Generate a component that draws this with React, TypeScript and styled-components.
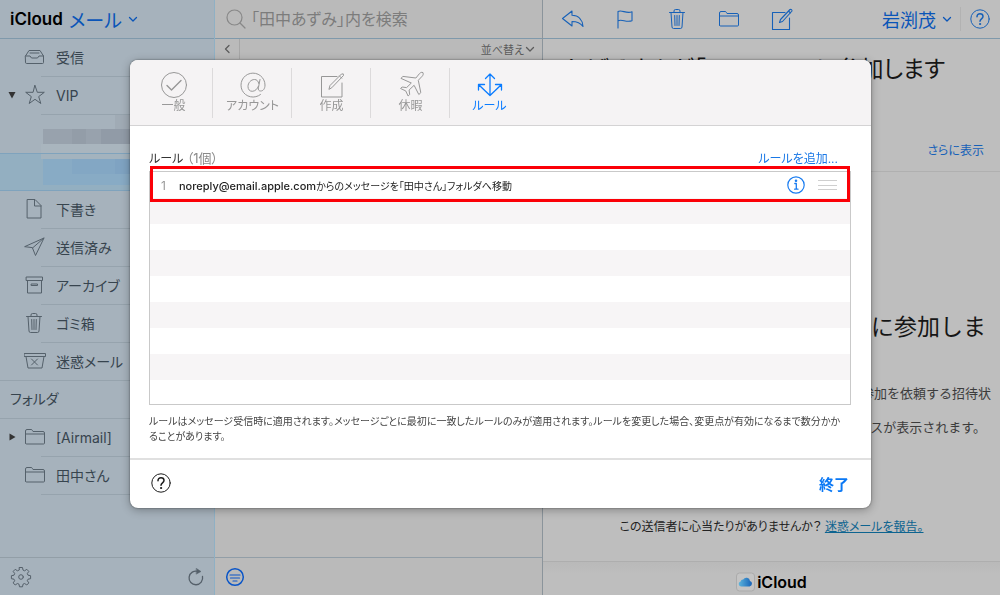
import React from "react";
import styled, { createGlobalStyle, css } from "styled-components";

const GlobalStyle = createGlobalStyle`
  * { box-sizing: border-box; }
  body {
    margin: 0;
    font-family: Inter, "Noto Sans CJK JP", sans-serif;
    font-feature-settings: "palt";
    color: #1c1c1c;
    background: #bebebe;
  }
  ul, ol { list-style: none; margin: 0; padding: 0; }
  h1, h2, h3, p { margin: 0; font-weight: 400; }
  svg { display: block; flex: none; }
`;

const line = "#7f99ab";

const Shell = styled.div`
  display: grid;
  grid-template-columns: 215px 328px 1fr;
  height: 100vh;
  overflow: hidden;
`;

const Pane = styled.div`
  display: flex;
  flex-direction: column;
  min-width: 0;
  min-height: 0;
`;

const Sidebar = styled(Pane)`
  background: #a6b2bc;
  border-right: 1px solid #8fb0c4;
  color: #37444e;
`;

const ListPane = styled(Pane)`
  background: #bababa;
  border-right: 1px solid #8b949b;
`;

const Bar = styled.header<{ $pad: string }>`
  display: flex;
  align-items: center;
  height: 39px;
  flex: none;
  padding: ${(p) => p.$pad};
  border-bottom: 1px solid ${line};
`;

const PlainButton = styled.button`
  display: flex;
  align-items: center;
  justify-content: center;
  padding: 0;
  border: 0;
  background: none;
  color: inherit;
  font: inherit;
  font-feature-settings: inherit;
  cursor: pointer;
`;

const Brand = styled.h1`
  font-size: 17px;
  font-weight: 600;
  color: #000;
`;

const AppSwitch = styled(PlainButton)`
  gap: 6px;
  margin-left: 6px;
  font-size: 19px;
  color: #0a55b8;
`;

const Mailboxes = styled.nav`
  flex: 1;
  min-height: 0;
`;

const Mailbox = styled.li`
  display: grid;
  grid-template-columns: 24px 32px 1fr;
  align-items: center;
  height: 38px;
  padding-bottom: 2px;
  color: #55616b;
`;

const MailboxLink = styled.a`
  display: flex;
  align-items: center;
  align-self: stretch;
  font-size: 14px;
  color: #37444e;
  text-decoration: none;
`;

const Divider = styled.hr<{ $left: number }>`
  height: 1px;
  margin: -1px 0 0 ${(p) => p.$left}px;
  border: 0;
  background: #96a3ad;
`;

const Twisty = styled(PlainButton)`
  color: #333;
`;

const Contact = styled.li<{ $selected?: boolean }>`
  height: 38px;
  padding-left: 41px;
  overflow: hidden;
  ${(p) =>
    p.$selected &&
    css`
      background: #93afc1;
      border-top: 1px solid #7fa3bd;
      border-bottom: 1px solid #7fa3bd;
    `}
`;

const SectionTitle = styled.h2`
  height: 38px;
  padding-left: 10px;
  font-size: 14px;
  line-height: 36px;
`;

const Foot = styled.footer`
  display: flex;
  align-items: center;
  justify-content: space-between;
  height: 38px;
  flex: none;
  padding: 0 9px 0 10px;
  border-top: 1px solid #929ea7;
  color: #55606a;
`;

const FilterButton = styled(PlainButton)`
  color: #0a55c8;
`;

const SearchLabel = styled.label`
  display: flex;
  align-items: center;
  gap: 5px;
  flex: 1;
  color: #888;
`;

const SearchInput = styled.input`
  flex: 1;
  min-width: 0;
  padding: 0;
  border: 0;
  outline: 0;
  background: none;
  font: inherit;
  font-size: 16px;
  font-feature-settings: inherit;
  &::placeholder { color: #7c7c7c; opacity: 1; }
`;

const SortBar = styled.div`
  display: flex;
  justify-content: space-between;
  height: 20px;
  flex: none;
  padding-right: 7px;
  color: #5c5c5c;
  font-size: 11px;
`;

const BackButton = styled(PlainButton)`
  width: 25px;
  border-right: 1px solid #a6a6a6;
`;

const SortButton = styled(PlainButton)`
  gap: 1px;
`;

const Grow = styled.div`
  flex: 1;
`;

const Detail = styled(Pane)`
  background: #bebebe;
`;

const ToolButton = styled(PlainButton)`
  width: 52px;
  height: 38px;
  color: #1761b8;
`;

const Account = styled(PlainButton)`
  gap: 6px;
  height: 24px;
  margin-left: auto;
  padding-right: 8px;
  border-right: 1px solid #b2b2b2;
  font-size: 18px;
  color: #0a55b8;
`;

const HelpTop = styled(PlainButton)`
  margin-left: 9px;
  color: #1761b8;
`;

const Message = styled.article`
  display: flex;
  flex-direction: column;
  align-items: flex-end;
  flex: 1;
  min-height: 0;
`;

const Subject = styled.h2`
  margin-top: 13px;
  padding-right: 55px;
  font-size: 23px;
  line-height: 34px;
  white-space: nowrap;
  color: #161616;
`;

const MoreRow = styled.div`
  display: flex;
  justify-content: flex-end;
  align-self: stretch;
  height: 86px;
  padding: 55px 16px 0 0;
  border-bottom: 1px solid #b0b0b0;
  font-size: 12px;
  line-height: 20px;
`;

const Link = styled.a<{ $tone: string; $under?: boolean }>`
  color: ${(p) => p.$tone};
  text-decoration: ${(p) => (p.$under ? "underline" : "none")};
`;

const Headline = styled.h3`
  margin-top: 137px;
  padding-right: 14px;
  font-size: 23px;
  line-height: 36px;
  font-feature-settings: normal;
  color: #161616;
`;

const Para = styled.p<{ $top: number; $right: number }>`
  margin-top: ${(p) => p.$top}px;
  padding-right: ${(p) => p.$right}px;
  font-size: 13px;
  line-height: 20px;
  font-feature-settings: normal;
  color: #3c3c3c;
`;

const Report = styled.p`
  align-self: center;
  margin-top: 80px;
  font-size: 12px;
  line-height: 20px;
  color: #222;
`;

const MessageFoot = styled.footer`
  display: flex;
  align-items: flex-start;
  justify-content: center;
  gap: 2px;
  align-self: stretch;
  flex: 1;
  margin-top: 24px;
  padding-top: 10px;
  border-top: 1px solid #aeaeae;
  background: linear-gradient(#b9b9b9, #bebebe 12px);
  font-size: 16px;
  font-weight: 600;
  line-height: 20px;
  color: #000;
`;

const Overlay = styled.div`
  position: fixed;
  inset: 0;
  padding: 60px 129px 0 130px;
`;

const Dialog = styled.section`
  border-radius: 8px;
  background: #fff;
  box-shadow: 0 0 2px rgba(0, 0, 0, 0.5), 0 2px 10px rgba(0, 0, 0, 0.3);
  overflow: hidden;
`;

const Tabs = styled.div`
  display: flex;
  align-items: center;
  height: 66px;
  padding-left: 3px;
  border-bottom: 1px solid #d4d3d4;
  background: #f5f3f4;
`;

const Tab = styled(PlainButton)<{ $active?: boolean }>`
  flex-direction: column;
  width: 80px;
  height: 50px;
  margin-right: -1px;
  padding: 0 0 1px 2px;
  border-right: 1px solid ${(p) => (p.$active ? "transparent" : "#dcdadb")};
  font-size: 12px;
  line-height: 14px;
  color: ${(p) => (p.$active ? "#0a7cff" : "#979797")};
`;

const DialogBody = styled.div`
  padding: 21px 20px 14px 19px;
`;

const RulesHead = styled.div`
  display: flex;
  align-items: center;
  justify-content: space-between;
  height: 20px;
  padding-right: 13px;
  font-size: 12px;
`;

const RulesTitle = styled.h2`
  font-size: 12px;
  color: #333;
`;

const Count = styled.span`
  font-size: 13px;
  color: #8a8a8a;
`;

const AddRule = styled(PlainButton)`
  color: #1a78e6;
`;

const RuleList = styled.ol`
  position: relative;
  margin-top: 4px;
  border: 1px solid #c9c9c9;
`;

const Rule = styled.li`
  display: flex;
  align-items: center;
  height: 26px;
  font-size: 12px;
  &:nth-child(even) { background: #f7f5f6; }
  &:last-of-type { height: 24px; }
`;

const RuleNumber = styled.span`
  width: 29px;
  padding-left: 11px;
  color: #999;
`;

const RuleText = styled.span`
  flex: 1;
  font-size: 10px;
  color: #222;
`;

const Address = styled.span`
  font-size: 11px;
  font-weight: 500;
`;

const InfoButton = styled(PlainButton)`
  margin-right: 13px;
  color: #1a7cf0;
`;

const Grip = styled(PlainButton)`
  margin-right: 13px;
  color: #cfcfcf;
`;

const Highlight = styled.div`
  position: absolute;
  inset: -6px 0 auto 0;
  height: 36px;
  border: 3px solid #fb0007;
  pointer-events: none;
`;

const Note = styled.p`
  margin-top: 9px;
  font-size: 10px;
  line-height: 15px;
  color: #444;
`;

const DialogFoot = styled.footer`
  display: flex;
  align-items: center;
  justify-content: space-between;
  height: 50px;
  padding: 0 22px 2px 21px;
  border-top: 2px solid #e0e0e0;
`;

const Done = styled(PlainButton)`
  font-size: 15px;
  font-weight: 700;
  color: #0a78f5;
`;

type IconProps = { w: number; h: number; d?: string; sw?: number; children?: React.ReactNode };

const Icon = ({ w, h, d, sw = 1, children }: IconProps) => (
  <svg width={w} height={h} viewBox={`0 0 ${w} ${h}`} fill="none" stroke="currentColor" strokeWidth={sw} strokeLinejoin="round" strokeLinecap="round" aria-hidden="true">
    {d && <path d={d} />}
    {children}
  </svg>
);

const Chevron = ({ sw = 1.3 }: { sw?: number }) => <Icon w={10} h={8} sw={sw} d="M1.5 2.5 5 6l3.500-3.500" />;
const InboxIcon = () => <Icon w={22} h={18} d="M1.500 8 5 2.500h11L19.500 8v6.500q0 1-1 1h-16q-1 0-1-1zM1.500 8H6l1.500 2h6L15 8h4.500M6 5h9" />;
const StarIcon = () => <Icon w={22} h={22} d="m11 1.500 2.300 6.800h7l-5.600 4.300 2.100 6.900-5.800-4.200-5.800 4.200 2.100-6.900-5.600-4.300h7z" />;
const FileIcon = () => <Icon w={22} h={22} d="M3.500 1.500H11l6 6v12.500H3.500zM10.500 1.500V8H17" />;
const PlaneIcon = () => <Icon w={22} h={22} d="M1 10.500 20 2l-8.500 17.500-3-7.500zM8.500 12 20 2" />;
const ArchiveIcon = () => <Icon w={22} h={20} d="M2.500 2h16v3.500h-16zM3.500 5.500V18h14V5.500M7.500 9h6v1.500h-6z" />;
const TrashIcon = () => <Icon w={20} h={22} d="M2.500 4.500h15M4 4.500l1 14.500q.1 1.500 1.500 1.500h7q1.400 0 1.500-1.500l1-14.500M7 4.500V3q0-1.500 1.500-1.500h3Q13 1.500 13 3v1.500M7.700 7.500l.3 10M10 7.500v10M12.300 7.500l-.3 10" />;
const JunkIcon = () => <Icon w={23} h={18} d="M.5 1.500h21v3H.5zM2 4.500l2 11.500h14L20 4.500M7.500 7l6 6M13.500 7l-6 6" />;
const FolderIcon = () => <Icon w={22} h={18} d="M1.500 15V3q0-1.500 1.500-1.500h4q1 0 1.500 1l.5 1h10q1.500 0 1.500 1.500v10q0 1-1 1h-17q-1 0-1-1zM1.500 6h19" />;
const ReplyIcon = () => <Icon w={24} h={20} sw={1.1} d="M1.500 9.500 11 2v4.300c6.500 0 10.500 4.500 11 11.200-2.500-3.500-5.500-5-11-5v4.500z" />;
const FlagIcon = () => <Icon w={18} h={20} sw={1.1} d="M2 19V2.500c4-2 8 2.500 14 .3v9c-6 2-10-2-14 0" />;
const ComposeIcon = () => <Icon w={24} h={24} sw={1.1} d="M16 5.500H3.500v17h17V11M10.500 15.500l1-3L21 2.500q2-.5 2 1.500L13.500 14.500zM19.500 4l2 2" />;
const AtIcon = () => (
  <Icon w={28} h={28}>
    <path d="M21.500 23.500A12 12 0 1 1 26 14c0 4-2 6-4.300 6-2 0-2.700-1.300-2.300-3.200L21 8.500" />
    <path d="M19.800 12.500c-.6-2.500-2-4-4.300-4-3.700 0-6.500 3.500-6.500 7 0 2.800 1.500 4.800 4.200 4.800 3 0 5.200-2.500 6.200-5" />
  </Icon>
);
const CheckIcon = () => (
  <Icon w={28} h={28}>
    <circle cx="14" cy="14" r="12.500" />
    <path d="m7 14.500 4.500 4.500L21 9.500" strokeWidth="1.400" />
  </Icon>
);
const ComposeLarge = () => <Icon w={28} h={28} d="M19 5.500H3.500V26H24V12M11 18l1-3.500L23.500 3q2.500-1 2 1.500L14 16.500zM21.500 5l2.200 2.200" />;
const JetIcon = () => <Icon w={28} h={28} d="M25.800 1.600c1 1 .4 2.500-.6 3.600l-3.900 4.100 2.500 12.400-2 1.800-4.700-9.200-5 4.700.6 4.500-1.600 1.500-2.400-5.100-5.100-2.400 1.500-1.500 4.500.6L14.300 12 4 7.400l1.800-2 13.100 1.600 3.500-4.300c1.100-1.200 2.500-2 3.400-1.100z" />;
const RulesIcon = () => <Icon w={28} h={28} sw={1.3} d="M14 24.500V3M9.500 7.500 14 3l4.500 4.500M14 24.500 3 14M2.500 19v-5.500h6M14 24.500 25 14M25.500 19v-5.500h-6" />;
const GearIcon = () => (
  <Icon w={22} h={22}>
    <circle cx="11" cy="11" r="2.300" />
    <path d="M9.500 1.500h3l.5 2.600 1.600.7 2.200-1.500 2 2.100-1.500 2.200.7 1.600 2.600.5v3l-2.600.5-.7 1.500 1.500 2.200-2 2.100-2.200-1.500-1.600.7-.5 2.600h-3L9 18.200l-1.600-.7L5.200 19l-2-2.100 1.500-2.200-.7-1.500-2.600-.5v-3L4 9.200l.7-1.600-1.500-2.200 2-2.100 2.200 1.500L9 4.100z" />
  </Icon>
);
const ReloadIcon = () => (
  <Icon w={18} h={20} sw={1.3}>
    <path d="M15.500 9.500A6.800 6.800 0 1 1 11 4.500" />
    <path d="m9.500 1.500 4.500 3-4.500 2.500z" fill="currentColor" strokeWidth=".5" />
  </Icon>
);
const FilterIcon = () => (
  <Icon w={20} h={20} sw={1.5}>
    <circle cx="10" cy="10" r="8.300" />
    <path d="M5 8h10M5.500 11h9M8 14h4" strokeWidth="1.200" />
  </Icon>
);
const HelpIcon = () => (
  <Icon w={20} h={20}>
    <circle cx="10" cy="10" r="9.200" />
    <path d="M7 7.800C7 5.900 8.200 4.800 10 4.800s3 1.100 3 2.700c0 2.300-3 2.300-3 4.700" strokeWidth="1.500" />
    <circle cx="10" cy="15" r=".6" fill="currentColor" />
  </Icon>
);
const InfoIcon = () => (
  <Icon w={18} h={18} sw={1.2}>
    <circle cx="9" cy="9" r="8.200" />
    <path d="M7.800 7.500H9.300V13M7.600 13.200h3.400" strokeWidth="1.300" />
    <circle cx="9" cy="4.800" r=".7" fill="currentColor" />
  </Icon>
);
const SearchIcon = () => (
  <Icon w={20} h={20} sw={1.2}>
    <circle cx="8.500" cy="8.500" r="7.500" />
    <path d="m14 14 5 5" />
  </Icon>
);
const CloudBadge = () => (
  <svg width="19" height="20" viewBox="0 0 19 20" aria-hidden="true">
    <defs>
      <linearGradient id="cloud" x1="0" y1="0" x2="1" y2="0">
        <stop offset="0" stopColor="#5db4dc" />
        <stop offset="1" stopColor="#1763b8" />
      </linearGradient>
    </defs>
    <rect x=".5" y="1" width="18" height="18" rx="3" fill="#c4c4c4" stroke="#ababab" />
    <path d="M5 14.500a2.600 2.600 0 0 1-.4-5.100 2.500 2.500 0 0 1 2.600-2 3.700 3.700 0 0 1 6.800 1.500 2.900 2.900 0 0 1-.4 5.600z" fill="url(#cloud)" />
  </svg>
);

const Box = ({ icon, label, twisty, last }: { icon: React.ReactNode; label: string; twisty?: "down" | "right"; last?: boolean }) => (
  <>
    <Mailbox>
      {twisty ? (
        <Twisty aria-label={`${label}を開閉`}>
          <svg width="8" height="8" viewBox="0 0 8 8" fill="currentColor">
            <path d={twisty === "down" ? "M.5 1h7L4 7.500z" : "M1.500.5v7L7.500 4z"} />
          </svg>
        </Twisty>
      ) : (
        <span />
      )}
      {icon}
      <MailboxLink href="#">{label}</MailboxLink>
    </Mailbox>
    <Divider $left={last ? 0 : 41} />
  </>
);

const folders: [React.ReactNode, string][] = [
  [<FileIcon />, "下書き"],
  [<PlaneIcon />, "送信済み"],
  [<ArchiveIcon />, "アーカイブ"],
  [<TrashIcon />, "ゴミ箱"],
  [<JunkIcon />, "迷惑メール"],
];

const tools: [string, React.ReactNode][] = [
  ["返信", <ReplyIcon />],
  ["フラグ", <FlagIcon />],
  ["削除", <TrashIcon />],
  ["移動", <FolderIcon />],
  ["新規作成", <ComposeIcon />],
];

const tabs: [string, React.ReactNode][] = [
  ["一般", <CheckIcon />],
  ["アカウント", <AtIcon />],
  ["作成", <ComposeLarge />],
  ["休暇", <JetIcon />],
  ["ルール", <RulesIcon />],
];

export default function App() {
  return (
    <>
      <GlobalStyle />
      <Shell>
        <Sidebar>
          <Bar $pad="0 0 0 10px">
            <Brand>iCloud</Brand>
            <AppSwitch>
              メール
              <Chevron />
            </AppSwitch>
          </Bar>
          <Mailboxes>
            <ul>
              <Box icon={<InboxIcon />} label="受信" />
              <Box icon={<StarIcon />} label="VIP" twisty="down" />
              <Contact>
                <svg width="174" height="38">
                  <rect x="74" y="0" width="100" height="15" fill="#a0abb5" />
                  <rect x="2" y="14" width="172" height="15" fill="#98a2ad" />
                  <rect x="31" y="14" width="14" height="15" fill="#939da8" />
                  <rect x="60" y="14" width="114" height="15" fill="#919ba7" />
                  <rect x="0" y="29" width="174" height="9" fill="#a9b5be" />
                </svg>
              </Contact>
              <Contact $selected>
                <svg width="174" height="36">
                  <rect x="0" y="0" width="174" height="5" fill="#a3b3be" />
                  <rect x="2" y="5" width="172" height="26" fill="#88abc5" />
                  <rect x="31" y="5" width="43" height="15" fill="#83a7c4" />
                  <rect x="74" y="5" width="100" height="15" fill="#7fa3c2" />
                </svg>
              </Contact>
              {folders.map(([icon, label], i) => (
                <Box key={label} icon={icon} label={label} last={i === folders.length - 1} />
              ))}
            </ul>
            <SectionTitle>フォルダ</SectionTitle>
            <Divider $left={0} />
            <ul>
              <Box icon={<FolderIcon />} label="[Airmail]" twisty="right" />
              <Box icon={<FolderIcon />} label="田中さん" />
            </ul>
          </Mailboxes>
          <Foot>
            <PlainButton aria-label="設定"><GearIcon /></PlainButton>
            <PlainButton aria-label="更新"><ReloadIcon /></PlainButton>
          </Foot>
        </Sidebar>

        <ListPane>
          <Bar $pad="0 8px 0 11px">
            <SearchLabel>
              <SearchIcon />
              <SearchInput type="search" aria-label="検索" placeholder="「田中あずみ」内を検索" />
            </SearchLabel>
          </Bar>
          <SortBar>
            <BackButton aria-label="戻る"><Icon w={8} h={10} sw={1.3} d="M6 1.500 2.500 5 6 8.500" /></BackButton>
            <SortButton>
              並べ替え
              <Chevron />
            </SortButton>
          </SortBar>
          <Grow />
          <Foot>
            <FilterButton aria-label="フィルタ"><FilterIcon /></FilterButton>
          </Foot>
        </ListPane>

        <Detail>
          <Bar $pad="0 10px 0 4px">
            {tools.map(([name, icon]) => (
              <ToolButton key={name} aria-label={name}>{icon}</ToolButton>
            ))}
            <Account>
              岩渕茂
              <Chevron />
            </Account>
            <HelpTop aria-label="ヘルプ"><HelpIcon /></HelpTop>
          </Bar>
          <Message>
            <Subject>しげるさんが「ファミリー」に参加します</Subject>
            <MoreRow>
              <Link href="#" $tone="#1761b8">さらに表示</Link>
            </MoreRow>
            <Headline>に参加しま</Headline>
            <Para $top={38} $right={9}>参加を依頼する招待状</Para>
            <Para $top={14} $right={14}>スが表示されます。</Para>
            <Report>
              この送信者に心当たりがありませんか？ <Link href="#" $tone="#0d6490" $under>迷惑メールを報告。</Link>
            </Report>
            <MessageFoot>
              <CloudBadge />
              iCloud
            </MessageFoot>
          </Message>
        </Detail>
      </Shell>

      <Overlay>
        <Dialog role="dialog" aria-label="環境設定">
          <Tabs role="tablist">
            {tabs.map(([name, icon], i) => (
              <Tab key={name} role="tab" aria-selected={i === 4} $active={i === 4}>
                {icon}
                {name}
              </Tab>
            ))}
          </Tabs>
          <DialogBody>
            <RulesHead>
              <RulesTitle>
                ルール <Count>（1個）</Count>
              </RulesTitle>
              <AddRule>ルールを追加...</AddRule>
            </RulesHead>
            <RuleList>
              <Rule>
                <RuleNumber>1</RuleNumber>
                <RuleText>
                  <Address>noreply@email.apple.com</Address>からのメッセージを「田中さん」フォルダへ移動
                </RuleText>
                <InfoButton aria-label="ルールの詳細"><InfoIcon /></InfoButton>
                <Grip aria-label="並べ替え"><Icon w={19} h={12} d="M0 1.500h19M0 6.500h19M0 10.500h19" /></Grip>
              </Rule>
              {Array.from({ length: 8 }, (_, i) => (
                <Rule key={i} />
              ))}
              <Highlight />
            </RuleList>
            <Note>
              ルールはメッセージ受信時に適用されます。メッセージごとに最初に一致したルールのみが適用されます。ルールを変更した場合、変更点が有効になるまで数分かか
              <br />
              ることがあります。
            </Note>
          </DialogBody>
          <DialogFoot>
            <PlainButton aria-label="ヘルプ"><HelpIcon /></PlainButton>
            <Done>終了</Done>
          </DialogFoot>
        </Dialog>
      </Overlay>
    </>
  );
}
